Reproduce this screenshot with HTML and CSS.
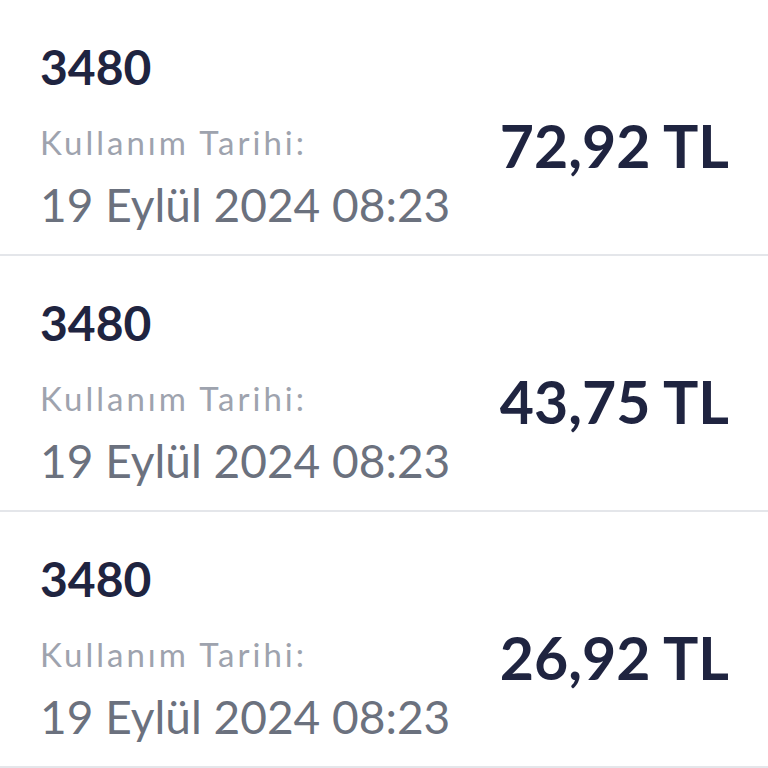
FILE: index.html
```html
<!DOCTYPE html>
<html lang="tr">
<head>
    <meta charset="UTF-8">
    <meta name="viewport" content="width=device-width, initial-scale=1.0">
    <title>Kullanım Geçmişi</title>
    <link rel="stylesheet" href="styles.css">
</head>
<body>
    <ul class="usage-list">
        <li class="usage">
            <div class="usage-info">
                <div class="usage-code">3480</div>
                <div class="usage-label">Kullanım Tarihi:</div>
                <div class="usage-date">19 Eylül 2024 08:23</div>
            </div>
            <div class="usage-amount">72,92 TL</div>
        </li>
        <li class="usage">
            <div class="usage-info">
                <div class="usage-code">3480</div>
                <div class="usage-label">Kullanım Tarihi:</div>
                <div class="usage-date">19 Eylül 2024 08:23</div>
            </div>
            <div class="usage-amount">43,75 TL</div>
        </li>
        <li class="usage">
            <div class="usage-info">
                <div class="usage-code">3480</div>
                <div class="usage-label">Kullanım Tarihi:</div>
                <div class="usage-date">19 Eylül 2024 08:23</div>
            </div>
            <div class="usage-amount">26,92 TL</div>
        </li>
    </ul>
</body>
</html>
```

FILE: styles.css
```css
body {
    margin: 0;
    background-color: #ffffff;
    font-family: 'Lato', 'Noto Sans', sans-serif;
    color: #1f2440;
}
.usage-list {
    list-style: none;
    margin: 0;
    padding: 0;
}
.usage {
    display: flex;
    justify-content: space-between;
    align-items: flex-start;
    box-sizing: border-box;
    height: 256px;
    padding: 43px 39px 0 40px;
    border-bottom: 2px solid #e4e6ea;
}
.usage-code {
    font-size: 48px;
    line-height: 48px;
    font-weight: 700;
    color: #1f2440;
}
.usage-label {
    margin-top: 35px;
    font-size: 33px;
    line-height: 33px;
    letter-spacing: 3px;
    color: #9ea3ae;
}
.usage-date {
    margin-top: 23px;
    font-size: 46px;
    line-height: 46px;
    color: #6b717e;
}
.usage-amount {
    margin-top: 73px;
    font-size: 59px;
    line-height: 59px;
    font-weight: 700;
    color: #1f2440;
}
```
